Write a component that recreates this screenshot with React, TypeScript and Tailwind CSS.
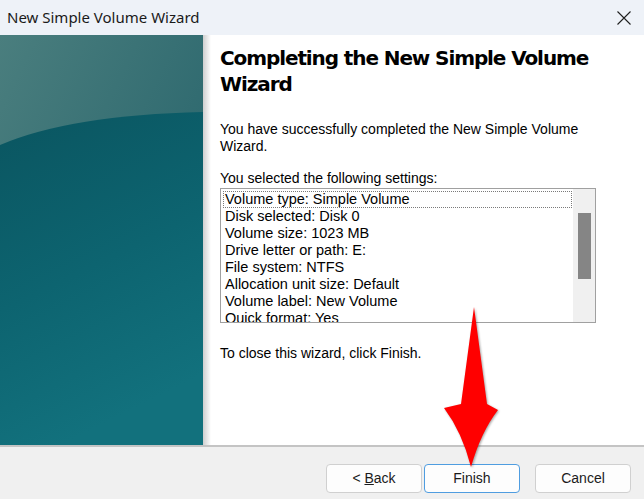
import React from "react";

const settings = [
  "Volume type: Simple Volume",
  "Disk selected: Disk 0",
  "Volume size: 1023 MB",
  "Drive letter or path: E:",
  "File system: NTFS",
  "Allocation unit size: Default",
  "Volume label: New Volume",
  "Quick format: Yes",
];

function SidePanel() {
  return (
    <div className="relative w-[203px] h-full shrink-0 overflow-hidden">
      <svg width="203" height="410" viewBox="0 0 203 410" className="block">
        <defs>
          <linearGradient id="upper" x1="0" y1="0" x2="1" y2="1">
            <stop offset="0" stopColor="#4a7e7e" />
            <stop offset="1" stopColor="#1f5e67" />
          </linearGradient>
          <linearGradient id="lower" x1="0" y1="0" x2="0.3" y2="1">
            <stop offset="0" stopColor="#0a5560" />
            <stop offset="0.55" stopColor="#0d6470" />
            <stop offset="1" stopColor="#12717d" />
          </linearGradient>
        </defs>
        <rect width="203" height="410" fill="url(#upper)" />
        <path d="M0,110 Q70,80 203,77 L203,410 L0,410 Z" fill="url(#lower)" />
      </svg>
    </div>
  );
}

function Button({
  children,
  primary,
}: {
  children: React.ReactNode;
  primary?: boolean;
}) {
  return (
    <button
      className={
        primary
          ? "w-[96px] h-[29px] rounded-[4px] border border-[#4f9de0] bg-[#fdfdfd] text-[14px] text-[#1b1b1b]"
          : "w-[96px] h-[29px] rounded-[4px] border border-[#d0d0d0] bg-[#fdfdfd] text-[14px] text-[#1b1b1b]"
      }
    >
      {children}
    </button>
  );
}

export default function App() {
  return (
    <div
      className="relative w-[644px] h-[499px] flex flex-col bg-white overflow-hidden"
      style={{ fontFamily: '"Liberation Sans", Arial, sans-serif' }}
    >
      {/* title bar */}
      <div className="h-[35px] shrink-0 flex items-center justify-between bg-[#eef2f8] pl-[7px] pr-[13px]">
        <span className="text-[15px] text-[#1a1a1a] font-['Noto_Sans',sans-serif] leading-none">
          New Simple Volume Wizard
        </span>
        <svg width="14" height="14" viewBox="0 0 14 14">
          <path d="M0.5,0.5 L13.5,13.5 M13.5,0.5 L0.5,13.5" stroke="#1f1f1f" strokeWidth="1.1" />
        </svg>
      </div>

      {/* body */}
      <div className="h-[410px] shrink-0 flex">
        <SidePanel />
        <div className="w-[8px] shrink-0 bg-gradient-to-r from-[#cfcfcf] to-white" />
        <div className="flex-1 pl-[9px] pt-[10px] text-[#000]">
          <h1 className="font-['DejaVu_Sans',sans-serif] font-bold text-[20px] leading-[26px] tracking-[-1.1px]">
            Completing the New Simple Volume
            <br />
            Wizard
          </h1>
          <p className="mt-[24px] text-[14px] leading-[17px]">
            You have successfully completed the New Simple Volume
            <br />
            Wizard.
          </p>
          <p className="mt-[15px] text-[14px] leading-[17px]">
            You selected the following settings:
          </p>
          <div className="mt-[1px] w-[376px] h-[135px] border border-[#a0a0a0] flex overflow-hidden">
            <div className="flex-1 pl-[2px] pt-[2px] pr-[1px] overflow-hidden">
              {settings.map((s, i) => (
                <div
                  key={s}
                  className={
                    i === 0
                      ? "h-[17px] leading-[15px] text-[14.5px] pl-[1px] border border-dotted border-[#7a7a7a] whitespace-nowrap"
                      : "h-[17px] leading-[17px] text-[14.5px] pl-[2px] whitespace-nowrap"
                  }
                >
                  {s}
                </div>
              ))}
            </div>
            <div className="w-[22px] shrink-0 bg-[#f0f0f0] pt-[24px] flex justify-center">
              <div className="w-[13px] h-[66px] bg-[#858585]" />
            </div>
          </div>
          <p className="mt-[22px] text-[14px] leading-[17px]">
            To close this wizard, click Finish.
          </p>
        </div>
      </div>

      {/* separator + footer */}
      <div className="h-[2px] shrink-0 bg-[#c4c4c4]" />
      <div className="flex-1 bg-[#f0f0f0] flex justify-end items-start pt-[17px] pr-[13px]">
        <div className="flex">
          <Button>
            &lt; <span className="underline">B</span>ack
          </Button>
          <div className="ml-[2px]">
            <Button primary>Finish</Button>
          </div>
          <div className="ml-[15px]">
            <Button>Cancel</Button>
          </div>
        </div>
      </div>

      {/* red arrow overlay */}
      <svg
        className="absolute inset-0 pointer-events-none"
        width="644"
        height="499"
        viewBox="0 0 644 499"
        style={{ filter: "drop-shadow(1px 1px 1px rgba(0,0,0,0.35))" }}
      >
        <path
          d="M474,307 L487,404 L498,410 Q481,432 471,467 Q462,432 444,408 L461,404 Z"
          fill="#ff0000"
        />
      </svg>
    </div>
  );
}
